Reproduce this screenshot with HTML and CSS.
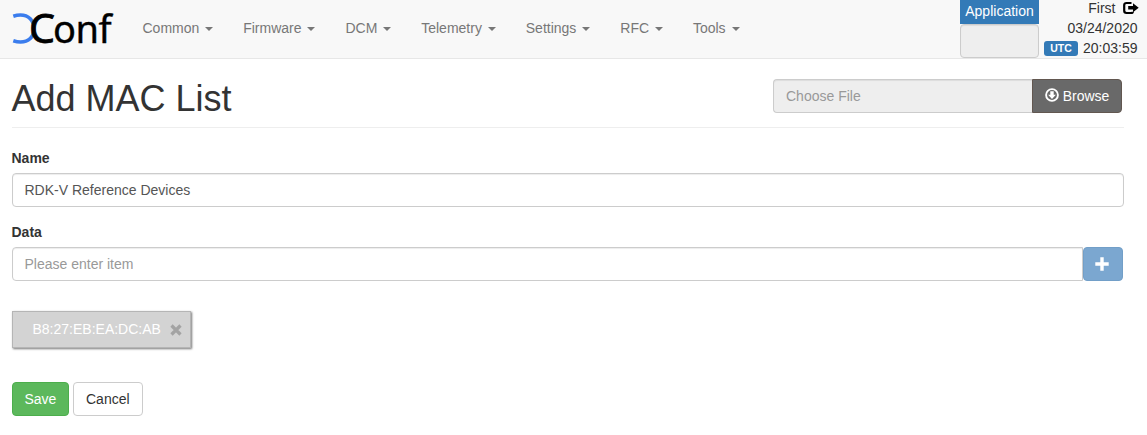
FILE: index.html
```html
<!DOCTYPE html>
<html lang="en">
<head>
<meta charset="utf-8">
<title>XConf</title>
<link rel="stylesheet" href="styles.css">
</head>
<body>
<header class="navbar">
  <svg class="logo" width="116" height="58" viewBox="0 0 116 58" role="img" aria-label="XConf">
    <path class="logo-arc" d="M13.300 16.200C16 15.300 18 15 20.500 15C28.500 15 34 20.500 34 28.700C34 37 28.500 42 20.500 42C18 42 16 41.600 13.300 40.700"/>
    <text class="logo-text" y="43"><tspan class="logo-c" x="29" textLength="26" lengthAdjust="spacingAndGlyphs">C</tspan><tspan x="53 75.500 98.500">onf</tspan></text>
  </svg>
  <nav class="menu">
    <a class="menu-item">Common <b class="caret"></b></a>
    <a class="menu-item">Firmware <b class="caret"></b></a>
    <a class="menu-item">DCM <b class="caret"></b></a>
    <a class="menu-item">Telemetry <b class="caret"></b></a>
    <a class="menu-item">Settings <b class="caret"></b></a>
    <a class="menu-item">RFC <b class="caret"></b></a>
    <a class="menu-item">Tools <b class="caret"></b></a>
  </nav>
  <div class="application">
    <div class="application-label">Application</div>
    <div class="application-select"></div>
  </div>
  <div class="session">
    <div class="session-row">First
      <svg class="logout" width="16" height="14" viewBox="0 0 16 14"><path d="M8.500 2H3.500Q1.200 2 1.200 4V9.800Q1.200 12 3.500 12H8.200Q9.800 12 9.800 10.800" fill="none" stroke="#000" stroke-width="2.200"/><path d="M10 2.300L15.700 6.800L10 11.300V8.500H5.200V5.100H10Z"/></svg>
    </div>
    <div class="session-row">03/24/2020</div>
    <div class="session-row"><span class="zone">UTC</span>20:03:59</div>
  </div>
</header>
<main class="content">
  <div class="page-header">
    <h1>Add MAC List</h1>
    <div class="file-group">
      <input class="control file-name" placeholder="Choose File" disabled>
      <button class="btn btn-browse"><svg width="14" height="14" viewBox="0 0 14 14"><circle cx="7" cy="7" r="5.900" fill="none" stroke="#fff" stroke-width="1.900"/><path d="M5.300 3.300H8.700V6.700H10.900L7 11L3.100 6.700H5.300Z" fill="#fff"/></svg>Browse</button>
    </div>
  </div>
  <label class="label" for="name">Name</label>
  <input class="control" id="name" value="RDK-V Reference Devices">
  <label class="label label-data" for="data">Data</label>
  <div class="item-group">
    <input class="control" id="data" placeholder="Please enter item">
    <button class="btn btn-add" aria-label="Add item"><svg width="14" height="14" viewBox="0 0 14 14"><path d="M5.300 .3H8.700V5.300H13.700V8.700H8.700V13.700H5.300V8.700H.3V5.300H5.300Z" fill="#fff"/></svg></button>
  </div>
  <div class="chip">B8:27:EB:EA:DC:AB<svg width="12" height="12" viewBox="0 0 12 12"><path d="M1.500 1.500L10.500 10.500M10.500 1.500L1.500 10.500" stroke="#a3a3a3" stroke-width="3.200"/></svg></div>
  <div class="actions">
    <button class="btn btn-save">Save</button>
    <button class="btn btn-cancel">Cancel</button>
  </div>
</main>
</body>
</html>
```
FILE: styles.css
```css
* { box-sizing: border-box; }
body {
  margin: 0;
  background: #fff;
  color: #333;
  font: 14px/20px "Liberation Sans", Arial, sans-serif;
}
.navbar {
  display: flex;
  height: 59px;
  padding-right: 9.5px;
  background: #f8f8f8;
  border-bottom: 1px solid #e7e7e7;
}
.logo { flex: none; display: block; }
.logo-arc { fill: none; stroke: #3b7ded; stroke-width: 3.6; }
.logo-text {
  font-family: "Noto Sans", sans-serif;
  font-size: 38px;
  fill: #000;
  stroke: #000;
  stroke-width: .4;
}
.logo-c { font-size: 39.5px; stroke-width: .8; }
.menu { display: flex; flex: 1; margin-left: 11.5px; }
.menu-item { padding: 18px 15px 0; color: #777; white-space: nowrap; }
.caret {
  display: inline-block;
  margin-left: 2px;
  vertical-align: middle;
  border-top: 4px solid #777;
  border-left: 4px solid transparent;
  border-right: 4px solid transparent;
}
.application { width: 79px; margin-right: 4px; }
.application-label {
  height: 24px;
  padding-top: 1px;
  background: #337ab7;
  color: #fff;
  text-align: center;
}
.application-select {
  height: 34px;
  background: #eee;
  border: 1px solid #ccc;
  border-radius: 4px;
  box-shadow: inset 0 1px 1px rgba(0, 0, 0, .075);
}
.session { width: 94.5px; margin-top: -2px; }
.session-row { display: flex; justify-content: flex-end; align-items: center; height: 20px; }
.logout { margin: 0 -1px 0 7px; }
.zone {
  width: 34px;
  height: 15px;
  margin-right: 5px;
  border-radius: 3px;
  background: #337ab7;
  color: #fff;
  font-size: 10.5px;
  font-weight: bold;
  line-height: 15px;
  text-align: center;
}
.content { padding: 20px 23px 0 11.5px; }
.page-header {
  display: flex;
  justify-content: space-between;
  height: 49px;
  margin-bottom: 20px;
  padding-right: 2px;
  border-bottom: 1px solid #eee;
}
h1 { margin: 0; font-size: 36px; font-weight: 500; line-height: 39px; }
.control {
  display: block;
  width: 100%;
  height: 34px;
  padding: 6px 12px;
  border: 1px solid #ccc;
  border-radius: 4px;
  background: #fff;
  color: #555;
  font: inherit;
  box-shadow: inset 0 1px 1px rgba(0, 0, 0, .075);
}
.control::placeholder { color: #999; opacity: 1; }
.file-group { display: flex; width: 349px; }
.file-name { flex: 1; width: 0; background: #eee; border-right: 0; border-radius: 4px 0 0 4px; }
.btn {
  height: 34px;
  padding: 6px 12px;
  border: 1px solid transparent;
  border-radius: 4px;
  font: inherit;
  white-space: nowrap;
}
.btn-browse {
  display: flex;
  gap: 4px;
  width: 90.3px;
  border-color: #625750;
  border-radius: 0 4px 4px 0;
  background: #696969;
  color: #fff;
}
.btn-browse svg { margin-top: 2px; flex: none; }
.label { display: block; margin-bottom: 5px; font-weight: bold; }
.label-data { margin-top: 15px; }
.item-group { display: flex; padding-right: 1px; }
.item-group .control { flex: 1; border-radius: 4px 0 0 4px; }
.btn-add { width: 40px; padding: 0 2px 0 0; border-color: #729fc8; background: #7ba7d0; }
.btn-add svg { display: block; margin: 0 auto; }
.chip {
  display: flex;
  align-items: center;
  gap: 9px;
  width: 179px;
  height: 37px;
  margin-top: 30px;
  padding: 0 0 1px 20px;
  border: 1px solid #b5b5b5;
  background: #d3d3d3;
  color: #fff;
  box-shadow: 1px 1px 2px #777;
}
.chip svg { margin-top: 2px; }
.actions { display: flex; gap: 4px; margin-top: 34px; }
.btn-save { width: 57px; border-color: #4cae4c; background: #5cb85c; color: #fff; }
.btn-cancel { width: 70px; padding-left: 12.5px; border-color: #ccc; background: #fff; color: #333; }
```
